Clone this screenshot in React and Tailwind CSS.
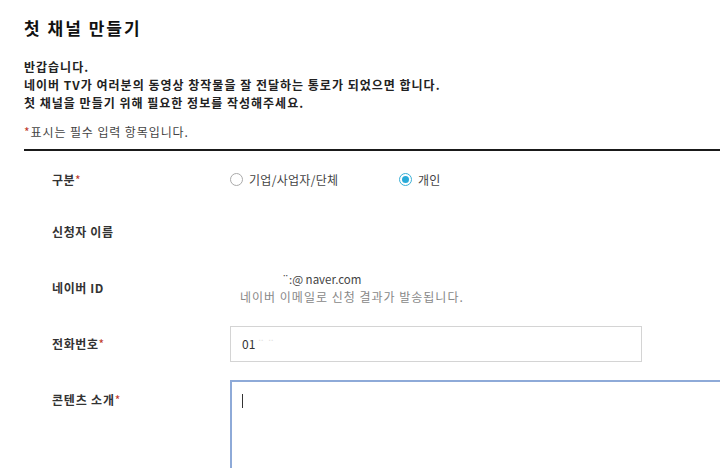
import React from "react";

const font = { fontFamily: '"Noto Sans CJK KR", "Noto Sans", sans-serif' };

const Req = () => <span className="text-[#c0392b] font-normal">*</span>;

const Radio = ({ checked, label }) => (
  <label className="flex items-center gap-[6px] text-[12px] text-[#444] tracking-[0.3px]">
    <span
      className={`w-[13px] h-[13px] rounded-full border flex items-center justify-center ${
        checked ? "border-[#3bb0d6]" : "border-[#aaa]"
      }`}
    >
      {checked && <span className="w-[7px] h-[7px] rounded-full bg-[#29abd9]"></span>}
    </span>
    {label}
  </label>
);

export default function App() {
  return (
    <div className="bg-white w-[720px] h-[468px] overflow-hidden text-[#333]" style={font}>
      <div className="pl-[24px]">
        <h1 className="pt-[16px] text-[17px] font-bold text-[#111] leading-[24px] tracking-[2px]">첫 채널 만들기</h1>

        <div className="mt-[18px] text-[12px] font-bold leading-[18px] text-[#222] tracking-[1px]">
          <p>반갑습니다.</p>
          <p>네이버 TV가 여러분의 동영상 창작물을 잘 전달하는 통로가 되었으면 합니다.</p>
          <p>첫 채널을 만들기 위해 필요한 정보를 작성해주세요.</p>
        </div>

        <p className="mt-[12px] text-[12px] leading-[16px] text-[#444] tracking-[0.9px]">
          <Req />표시는 필수 입력 항목입니다.
        </p>

        <div className="mt-[9px] border-t-2 border-[#1a1a1a]"></div>

        <div className="pl-[28px]">
          {/* 구분 */}
          <div className="flex items-center h-[57px]">
            <div className="w-[178px] text-[12px] font-bold tracking-[0.5px]">
              구분<Req />
            </div>
            <div className="flex items-center">
              <div className="w-[169px]">
                <Radio label="기업/사업자/단체" />
              </div>
              <Radio checked label="개인" />
            </div>
          </div>

          {/* 신청자 이름 */}
          <div className="flex items-center h-[48px]">
            <div className="w-[178px] text-[12px] font-bold tracking-[0.6px]">신청자 이름</div>
            <div className="text-[12px] text-[#f4f4f4]">&nbsp;</div>
          </div>

          {/* 네이버 ID */}
          <div className="flex items-center h-[64px]">
            <div className="w-[178px] text-[12px] font-bold tracking-[0.6px]">네이버 ID</div>
            <div className="pl-[10px] text-[11.5px] leading-[17px]">
              <p className="text-[#444]">
                <span className="inline-block w-[42px]"></span>¨:@ naver.com
              </p>
              <p className="text-[#888] text-[12px] tracking-[1px]">네이버 이메일로 신청 결과가 발송됩니다.</p>
            </div>
          </div>

          {/* 전화번호 */}
          <div className="flex items-center h-[48px]">
            <div className="w-[178px] text-[12px] font-bold tracking-[0.6px]">
              전화번호<Req />
            </div>
            <div className="w-[412px] h-[36px] border border-[#d4d4d4] flex items-center pl-[11px] text-[12px] text-[#333]">
              01<span className="text-[#ddd] ml-[2px]">¨ ¨</span>
            </div>
          </div>

          {/* 콘텐츠 소개 */}
          <div className="flex items-start mt-[12px]">
            <div className="w-[178px] pt-[11px] text-[12px] font-bold tracking-[0.8px]">
              콘텐츠 소개<Req />
            </div>
            <div className="flex-1 h-[120px] border-2 border-r-0 border-[#8eaad8] pl-[10px] pt-[12px]">
              <span className="block w-px h-[14px] bg-[#333]"></span>
            </div>
          </div>
        </div>
      </div>
    </div>
  );
}
